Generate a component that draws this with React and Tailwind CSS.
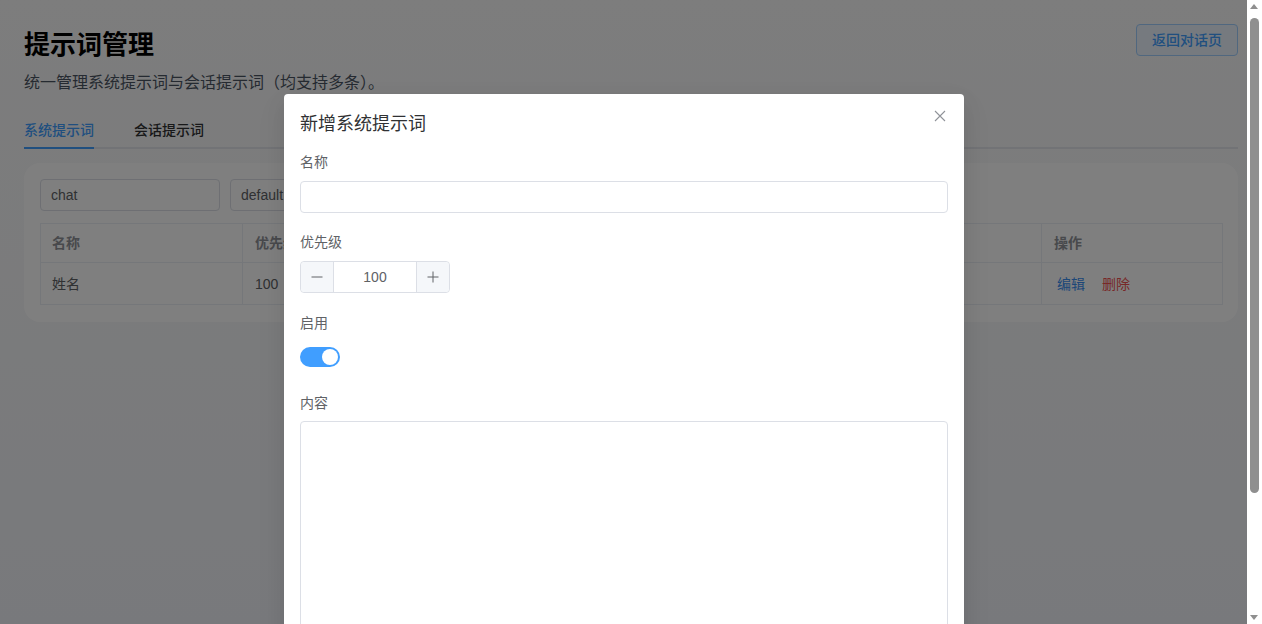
import React from "react";

const font = "font-['Liberation_Sans','Noto_Sans_CJK_SC',sans-serif]";

function Field({ label, low, children }) {
  return (
    <div className="mb-[18px]">
      <div className={`mb-2 h-[22px] text-sm text-[#606266] ${low ? "leading-[24px]" : "leading-[22px]"}`}>{label}</div>
      {children}
    </div>
  );
}

export default function App() {
  return (
    <div className={`flex h-[624px] w-[1262px] overflow-hidden bg-white ${font}`}>
      <div className="relative h-full w-[1247px] overflow-hidden bg-gradient-to-b from-[#fafafa] to-[#f1f3f8]">
        <div className="w-[1262px] p-6">
          <div className="flex items-start justify-between">
            <div>
              <h1 className="mt-[4px] text-[26px] leading-[34px] font-bold text-black">提示词管理</h1>
              <p className="mt-[10px] text-base leading-[22px] text-[#4b5563]">统一管理系统提示词与会话提示词（均支持多条）。</p>
            </div>
            <button className="h-8 w-[102px] rounded border border-[#a0cfff] bg-[#ecf5ff] text-sm font-medium text-[#409eff]">返回对话页</button>
          </div>

          <div className="mt-[17px] flex h-[38px] gap-10 border-b-2 border-[#e4e7ed] text-sm leading-[38px] font-medium">
            <div className="-mb-[2px] h-[38px] border-b-2 border-[#409eff] text-[#409eff]">系统提示词</div>
            <div className="text-[#303133]">会话提示词</div>
          </div>

          <div className="mt-[14px] rounded-2xl bg-white px-4 pt-4 pb-[17px]">
            <div className="flex gap-[10px]">
              <div className="h-8 w-[180px] rounded border border-[#dcdfe6] px-[10px] text-sm leading-[30px] text-[#606266]">chat</div>
              <div className="h-8 w-[180px] rounded border border-[#dcdfe6] px-[10px] text-sm leading-[30px] text-[#606266]">default</div>
            </div>
            <table className="mt-3 w-[1182px] table-fixed border-collapse text-sm text-[#606266]">
              <colgroup>
                <col className="w-[202px]" />
                <col className="w-[799px]" />
                <col className="w-[181px]" />
              </colgroup>
              <thead>
                <tr className="h-[39px] text-left font-bold text-[#909399]">
                  <th className="border border-[#ebeef5] px-[11px]">名称</th>
                  <th className="border border-[#ebeef5] pl-3">优先级</th>
                  <th className="border border-[#ebeef5] pl-3">操作</th>
                </tr>
              </thead>
              <tbody>
                <tr className="h-[42px]">
                  <td className="border border-[#ebeef5] px-[11px]">姓名</td>
                  <td className="border border-[#ebeef5] pl-3">100</td>
                  <td className="border border-[#ebeef5] pl-3">
                    <span className="ml-[3px] text-[#3b8ef0]">编辑</span>
                    <span className="ml-[17px] text-[#f05050]">删除</span>
                  </td>
                </tr>
              </tbody>
            </table>
          </div>
        </div>

        <div className="absolute inset-0 bg-black/50" />

        <div className="absolute top-[94px] left-[284px] w-[680px] rounded bg-white p-4 shadow-[0_12px_32px_4px_rgba(0,0,0,0.04),0_8px_20px_rgba(0,0,0,0.08)]">
          <button className="absolute top-[15px] right-[17px] text-[#909399]" aria-label="关闭">
            <svg width="14" height="14" viewBox="0 0 14 14" fill="none" stroke="currentColor" strokeWidth="1.1">
              <path d="M2 2 L12 12 M12 2 L2 12" />
            </svg>
          </button>
          <div className="mb-[15px] h-[26px] text-lg leading-[28px] text-[#303133]">新增系统提示词</div>
          <Field label="名称">
            <div className="h-8 rounded border border-[#dcdfe6] bg-white" />
          </Field>
          <Field label="优先级">
            <div className="flex h-8 w-[150px] rounded border border-[#dcdfe6] text-sm text-[#606266]">
              <div className="flex w-[33px] items-center justify-center rounded-l border-r border-[#dcdfe6] bg-[#f5f7fa] pr-[1px]">
                <svg width="14" height="14" viewBox="0 0 14 14" stroke="currentColor" strokeWidth="1"><path d="M1.5 7 H12.5" /></svg>
              </div>
              <div className="flex flex-1 items-center justify-center">100</div>
              <div className="flex w-[33px] items-center justify-center rounded-r border-l border-[#dcdfe6] bg-[#f5f7fa] pr-[1px]">
                <svg width="14" height="14" viewBox="0 0 14 14" stroke="currentColor" strokeWidth="1"><path d="M1.5 7 H12.5 M7 1.5 V12.5" /></svg>
              </div>
            </div>
          </Field>
          <Field label="启用" low>
            <div className="flex h-8 items-center">
              <div className="flex h-5 w-10 items-center justify-end rounded-full bg-[#409eff] pr-[2px]">
                <div className="h-4 w-4 rounded-full bg-white" />
              </div>
            </div>
          </Field>
          <Field label="内容" low>
            <div className="h-[400px] rounded border border-[#dcdfe6] bg-white" />
          </Field>
        </div>
      </div>

      <div className="relative h-full w-[15px] bg-white">
        <div className="absolute top-[4px] left-[3px] h-0 w-0 border-x-[4.5px] border-b-[5px] border-x-transparent border-b-[#8f8f8f]" />
        <div className="absolute top-[18px] left-[3px] h-[475px] w-[9px] rounded-full bg-[#8f8f8f]" />
        <div className="absolute bottom-[4px] left-[3px] h-0 w-0 border-x-[4.5px] border-t-[5px] border-x-transparent border-t-[#8f8f8f]" />
      </div>
    </div>
  );
}
